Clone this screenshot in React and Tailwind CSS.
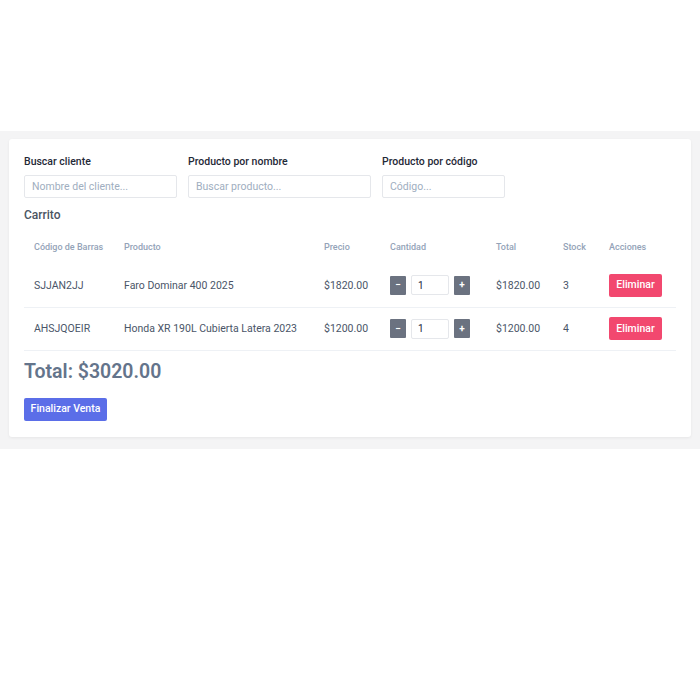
import React from 'react';

const items = [
  { code: 'SJJAN2JJ', name: 'Faro Dominar 400 2025', price: 1820, qty: 1, stock: 3 },
  { code: 'AHSJQOEIR', name: 'Honda XR 190L Cubierta Latera 2023', price: 1200, qty: 1, stock: 4 },
];

function Field({ label, placeholder, width }) {
  return (
    <div className={width}>
      <label className="block text-[10.5px] leading-[14px] font-medium text-[#1f2937] mb-[6px]">{label}</label>
      <input
        placeholder={placeholder}
        className="block w-full h-[23px] border border-[#e5e7eb] rounded-[2px] px-[7px] text-[10.5px] text-gray-700 placeholder:text-[#a0aec0] outline-none"
      />
    </div>
  );
}

export default function App() {
  const total = items.reduce((s, i) => s + i.price * i.qty, 0);
  return (
    <div className="w-[700px] h-[700px] bg-white" style={{ fontFamily: 'Roboto, "Noto Sans", sans-serif' }}>
      <div className="h-[131px]" />
      {/* gray wrapper */}
      <div className="bg-[#f4f4f5] pt-[8px] pb-[12px] px-[9px]">
        <div className="bg-white rounded-[3px] shadow-[0_1px_3px_rgba(0,0,0,0.06)] pt-[16px] pb-[16px] px-[15px]">
          <div className="flex gap-[11px]">
            <Field label="Buscar cliente" placeholder="Nombre del cliente..." width="w-[153px]" />
            <Field label="Producto por nombre" placeholder="Buscar producto..." width="w-[183px]" />
            <Field label="Producto por código" placeholder="Código..." width="w-[123px]" />
          </div>

          <h2 className="mt-[9px] text-[12px] leading-[16px] font-medium text-[#4b5563]">Carrito</h2>

          <table className="mt-[9px] w-[652px] table-fixed border-collapse">
            <colgroup>
              <col className="w-[90px]" />
              <col className="w-[200px]" />
              <col className="w-[66px]" />
              <col className="w-[106px]" />
              <col className="w-[67px]" />
              <col className="w-[46px]" />
              <col className="w-[77px]" />
            </colgroup>
            <thead>
              <tr className="h-[32px] text-left text-[9px] text-[#94a3b8]">
                <th className="pl-[10px] font-medium">Código de Barras</th>
                <th className="pl-[10px] font-medium">Producto</th>
                <th className="pl-[10px] font-medium">Precio</th>
                <th className="pl-[10px] font-medium">Cantidad</th>
                <th className="pl-[10px] font-medium">Total</th>
                <th className="pl-[10px] font-medium">Stock</th>
                <th className="pl-[10px] font-medium">Acciones</th>
              </tr>
            </thead>
            <tbody>
              {items.map((it) => (
                <tr key={it.code} className="h-[43px] border-b border-[#eef1f5] text-[10.5px] text-[#4a5568]">
                  <td className="pl-[10px] pt-[1px]">{it.code}</td>
                  <td className="pl-[10px] pt-[1px] whitespace-nowrap">{it.name}</td>
                  <td className="pl-[10px] pt-[1px]">${it.price.toFixed(2)}</td>
                  <td className="pl-[10px]">
                    <div className="flex items-center gap-[5px]">
                      <button className="w-[16px] h-[19px] bg-[#6b7280] text-white text-[10px] font-bold leading-none rounded-[1px]">−</button>
                      <input
                        defaultValue={it.qty}
                        className="w-[38px] h-[20px] border border-[#e5e7eb] rounded-[2px] px-[6px] text-[10px] text-gray-800 outline-none"
                      />
                      <button className="w-[16px] h-[19px] bg-[#6b7280] text-white text-[10px] font-bold leading-none rounded-[1px]">+</button>
                    </div>
                  </td>
                  <td className="pl-[10px] pt-[1px]">${(it.price * it.qty).toFixed(2)}</td>
                  <td className="pl-[10px] pt-[1px]">{it.stock}</td>
                  <td className="pl-[10px]">
                    <button className="w-[53px] h-[23px] bg-[#f2486f] text-white text-[10.5px] font-medium rounded-[2px]">Eliminar</button>
                  </td>
                </tr>
              ))}
            </tbody>
          </table>

          <div className="mt-[9px] text-[19.5px] leading-[24px] font-semibold text-[#64748b]">Total: ${total.toFixed(2)}</div>

          <button className="block mt-[14px] w-[83px] h-[23px] bg-[#5b6ee8] text-white text-[10.5px] font-medium rounded-[2px]">Finalizar Venta</button>
        </div>
      </div>
    </div>
  );
}
